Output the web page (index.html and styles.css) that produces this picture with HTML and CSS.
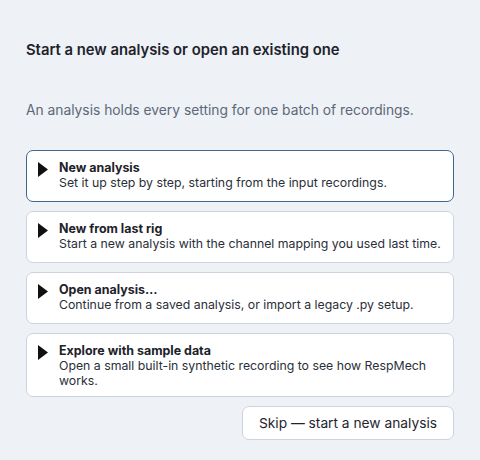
FILE: index.html
```html
<!DOCTYPE html>
<html>
<head>
<meta charset="utf-8">
<link rel="stylesheet" href="styles.css">
</head>
<body>
<main class="page">
  <h1 class="title">Start a new analysis or open an existing one</h1>
  <p class="lead">An analysis holds every setting for one batch of recordings.</p>
  <div class="options">
    <button class="option focused">
      <svg class="arrow" viewBox="0 0 10 15" width="10" height="15"><polygon points="0,0 10,7.5 0,15" /></svg>
      <span class="text">
        <span class="name">New analysis</span>
        <span class="desc">Set it up step by step, starting from the input recordings.</span>
      </span>
    </button>
    <button class="option">
      <svg class="arrow" viewBox="0 0 10 15" width="10" height="15"><polygon points="0,0 10,7.5 0,15" /></svg>
      <span class="text">
        <span class="name">New from last rig</span>
        <span class="desc">Start a new analysis with the channel mapping you used last time.</span>
      </span>
    </button>
    <button class="option">
      <svg class="arrow" viewBox="0 0 10 15" width="10" height="15"><polygon points="0,0 10,7.5 0,15" /></svg>
      <span class="text">
        <span class="name">Open analysis…</span>
        <span class="desc">Continue from a saved analysis, or import a legacy .py setup.</span>
      </span>
    </button>
    <button class="option">
      <svg class="arrow" viewBox="0 0 10 15" width="10" height="15"><polygon points="0,0 10,7.5 0,15" /></svg>
      <span class="text">
        <span class="name">Explore with sample data</span>
        <span class="desc">Open a small built-in synthetic recording to see how RespMech works.</span>
      </span>
    </button>
  </div>
  <div class="footer">
    <button class="skip">Skip — start a new analysis</button>
  </div>
</main>
</body>
</html>
```
FILE: styles.css
```css
html, body {
  margin: 0;
  background: #eef1f6;
}
body {
  font-family: Inter, "Noto Sans", sans-serif;
  color: #1f2530;
}
.page {
  padding: 40px 26px 0 26px;
  width: 428px;
}
.title {
  margin: 0;
  font-size: 14.8px;
  font-weight: 600;
  line-height: 20px;
  color: #1e232b;
}
.lead {
  margin: 41px 0 0 0;
  font-size: 13.8px;
  line-height: 18px;
  color: #5d6878;
}
.options {
  margin-top: 31px;
  display: flex;
  flex-direction: column;
  gap: 9px;
}
.option {
  box-sizing: border-box;
  min-height: 52px;
  display: flex;
  align-items: flex-start;
  gap: 11px;
  text-align: left;
  background: #ffffff;
  border: 1px solid #cdd3dd;
  border-radius: 7px;
  padding: 10px 6px 8px 11px;
  font-family: inherit;
  cursor: pointer;
}
.option.focused {
  border-color: #3b6894;
}
.arrow {
  flex: none;
  margin-top: 1px;
  fill: #111111;
}
.text {
  display: flex;
  flex-direction: column;
}
.name {
  font-size: 12.45px;
  font-weight: 700;
  line-height: 14px;
  color: #1d222a;
}
.desc {
  font-size: 12.3px;
  line-height: 15px;
  color: #2a2f38;
}
.footer {
  display: flex;
  justify-content: flex-end;
  margin-top: 9px;
}
.skip {
  font-family: inherit;
  font-size: 13.75px;
  color: #1f2530;
  background: #ffffff;
  border: 1px solid #cdd3dd;
  border-radius: 7px;
  width: 212px;
  height: 34px;
  padding: 0;
}
```
